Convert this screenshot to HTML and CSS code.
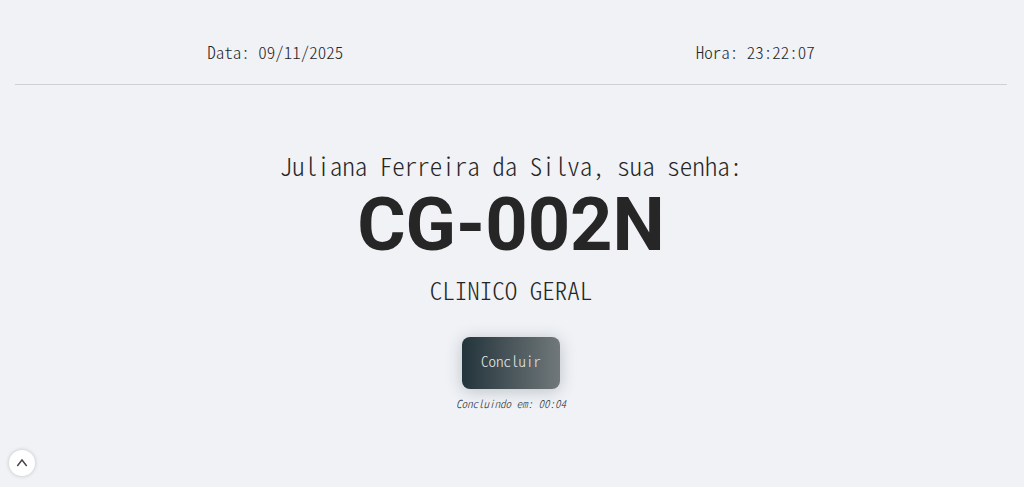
FILE: index.html
```html
<!DOCTYPE html>
<html lang="pt-BR">
<head>
    <meta charset="UTF-8">
    <meta name="viewport" content="width=device-width, initial-scale=1.0">
    <title>Senha</title>
    <link rel="stylesheet" href="styles.css">
</head>
<body>
    <header class="header">
        <p>Data: 09/11/2025</p>
        <p>Hora: 23:22:07</p>
    </header>

    <main class="ticket">
        <p class="patient">Juliana Ferreira da Silva, sua senha:</p>
        <h1 class="number">CG-002N</h1>
        <p class="specialty">CLINICO GERAL</p>
        <button type="button" class="finish">Concluir</button>
        <p class="countdown">Concluindo em: 00:04</p>
    </main>

    <button type="button" class="to-top" aria-label="Voltar ao topo">
        <svg width="12" height="12" viewBox="0 0 12 12" fill="none" stroke="#444" stroke-width="1.4">
            <path d="M1.3 9L6 3L10.7 9"/>
        </svg>
    </button>
</body>
</html>
```

FILE: styles.css
```css
*{
    margin: 0;
    padding: 0;
    box-sizing: border-box;
}

body{
    min-height: 100vh;
    padding: 0 17px 0 15px;
    background: #f0f2f6;
    color: #262626;
    font-family: "Noto Sans CJK SC", "Liberation Mono", monospace;
    font-feature-settings: "hwid";
    font-weight: 300;
}

.header{
    display: flex;
    justify-content: space-around;
    padding: 40px 16px 20px;
    border-bottom: 1px solid #cdd1d5;
    font-size: 17px;
    line-height: 24px;
}

.ticket{
    display: flex;
    flex-direction: column;
    align-items: center;
    padding-top: 62px;
}

.patient,
.specialty{
    font-size: 25px;
    line-height: 36px;
}

.number{
    font-family: Roboto, sans-serif;
    font-size: 74px;
    font-weight: 700;
    line-height: 84px;
}

.specialty{
    margin: 4px 0 30px;
}

.finish{
    padding: 13px 19px 17px;
    border: none;
    border-radius: 8px;
    background: linear-gradient(90deg, #23343b, #70787a);
    box-shadow: 0 2px 16px rgba(35, 52, 59, .25);
    color: #e6e9ea;
    font: inherit;
    font-size: 15px;
    line-height: 22px;
    font-feature-settings: inherit;
    cursor: pointer;
}

.countdown{
    margin-top: 6px;
    font-size: 11px;
    font-style: italic;
    line-height: 16px;
}

.to-top{
    position: fixed;
    left: 9px;
    bottom: 11px;
    display: flex;
    align-items: center;
    justify-content: center;
    width: 26px;
    height: 26px;
    border: none;
    border-radius: 50%;
    background: #fff;
    box-shadow: 0 0 4px rgba(0, 0, 0, .2);
    cursor: pointer;
}
```
